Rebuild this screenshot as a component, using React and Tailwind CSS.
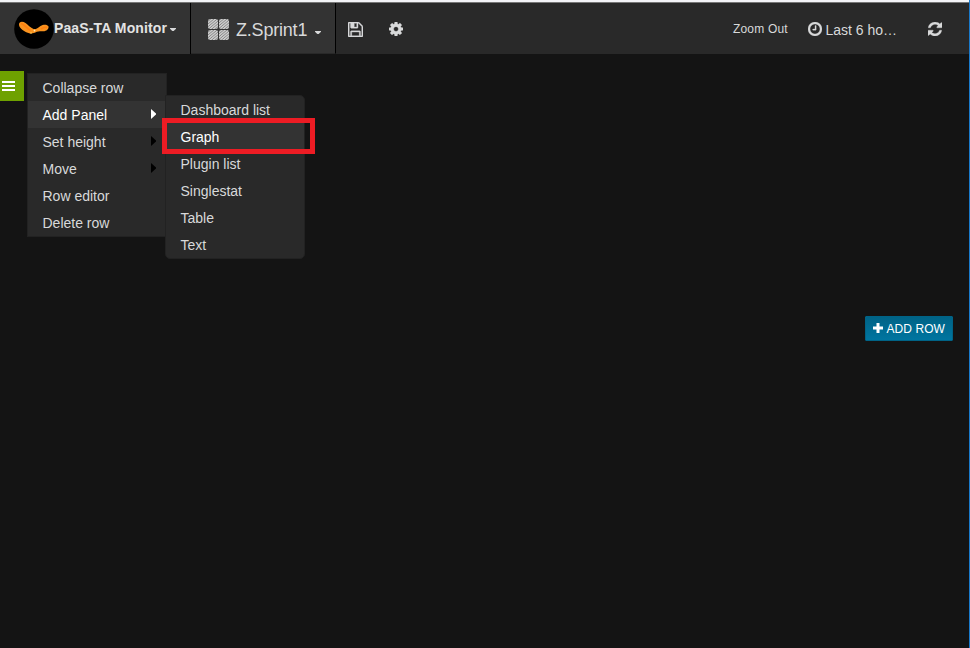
const ICONS = {
  save: 'M384 1536h768v-384h-768v384zm896 0h128v-896q0-14-10-38.5t-20-34.5l-281-281q-10-10-34-20t-39-10v416q0 40-28 68t-68 28h-576q-40 0-68-28t-28-68v-416h-128v1280h128v-416q0-40 28-68t68-28h832q40 0 68 28t28 68v416zm-384-928v-320q0-13-9.5-22.5t-22.5-9.5h-192q-13 0-22.5 9.5t-9.5 22.5v320q0 13 9.5 22.5t22.5 9.5h192q13 0 22.5-9.5t9.5-22.5zm640 32v928q0 40-28 68t-68 28h-1344q-40 0-68-28t-28-68v-1344q0-40 28-68t68-28h928q40 0 88 20t76 48l280 280q28 28 48 76t20 88z',
  cog: 'M1024 896q0-106-75-181t-181-75-181 75-75 181 75 181 181 75 181-75 75-181zm512-109v222q0 12-8 23t-20 13l-185 28q-19 54-39 91 35 50 107 138 10 12 10 25t-9 23q-27 37-99 108t-94 71q-12 0-26-9l-138-108q-44 23-91 38-16 136-29 186-7 28-36 28h-222q-14 0-24.5-8.5t-11.5-21.5l-28-184q-49-16-90-37l-141 107q-10 9-25 9-14 0-25-11-126-114-165-168-7-10-7-23 0-12 8-23 15-21 51-66.5t54-70.5q-27-50-41-99l-183-27q-13-2-21-12.5t-8-23.5v-222q0-12 8-23t19-13l186-28q14-46 39-92-40-57-107-138-10-12-10-24 0-10 9-23 26-36 98.5-107.5t94.5-71.5q13 0 26 10l138 107q44-23 91-38 16-136 29-186 7-28 36-28h222q14 0 24.5 8.5t11.5 21.5l28 184q49 16 90 37l142-107q9-9 24-9 13 0 25 10 129 119 165 170 7 8 7 22 0 12-8 23-15 21-51 66.5t-54 70.5q26 50 41 98l183 28q13 2 21 12.5t8 23.5z',
  clock: 'M896 544v448q0 14-9 23t-23 9h-320q-14 0-23-9t-9-23v-64q0-14 9-23t23-9h224v-352q0-14 9-23t23-9h64q14 0 23 9t9 23zm416 352q0-148-73-273t-198-198-273-73-273 73-198 198-73 273 73 273 198 198 273 73 273-73 198-198 73-273zm224 0q0 209-103 385.5t-279.5 279.5-385.5 103-385.5-103-279.5-279.5-103-385.5 103-385.5 279.5-279.5 385.5-103 385.5 103 279.5 279.5 103 385.5z',
  refresh: 'M1511 1056q0 5-1 7-64 268-268 434.5t-478 166.5q-146 0-282.5-55t-243.5-157l-129 129q-19 19-45 19t-45-19-19-45v-448q0-26 19-45t45-19h448q26 0 45 19t19 45-19 45l-137 137q71 66 161 102t187 36q134 0 250-65t186-179q11-17 53-117 8-23 30-23h192q13 0 22.5 9.5t9.5 22.5zm25-800v448q0 26-19 45t-45 19h-448q-26 0-45-19t-19-45 19-45l138-138q-148-137-349-137-134 0-250 65t-186 179q-11 17-53 117-8 23-30 23h-199q-13 0-22.5-9.5t-9.5-22.5v-7q65-268 270-434.5t480-166.5q146 0 284 55.5t245 156.5l130-129q19-19 45-19t45 19 19 45z',
};

function Icon({ name, className }) {
  return (
    <svg viewBox="0 128 1536 1536" className={className} fill="currentColor" stroke="currentColor" strokeWidth="35">
      <path d={ICONS[name]} />
    </svg>
  );
}

function Caret({ className }) {
  return (
    <svg viewBox="0 0 6 3" className={className} fill="currentColor">
      <path d="M0 0h6v.8L3.700 3H2.300L0 .8z" />
    </svg>
  );
}

function Logo() {
  return (
    <svg viewBox="0 0 40 40" className="size-10 shrink-0">
      <circle cx="20" cy="20" r="19.800" fill="#000" />
      <path
        d="M5 15.500c0-3 3.600-3.400 6.500-1.400 2.600 1.900 4.600 4.800 8.500 6.100 2.800 0 4-1.200 6.500-3.200 3-2 7-1.600 7.900.3.700 2-.9 4.300-3.900 4.900-2.900.4-4.900-.7-7.700.6-3 1.600-5.400 2.300-8.300 1.200C10.500 22.600 5 19.500 5 15.500z"
        fill="#f9931f"
      />
      <path d="M7 14.500c3.500.5 5.500 5 9.500 7M27 20c2-1.500 4-2 6-1.500" stroke="#ff7f10" strokeWidth="1.500" fill="none" />
      <circle cx="20.500" cy="21.500" r=".9" fill="#ffe9b0" />
      <circle cx="17" cy="24" r=".8" fill="#ffd75e" />
    </svg>
  );
}

function DashboardIcon() {
  const tiles = [[0, 0], [11, 0], [0, 11], [11, 11]];
  return (
    <svg viewBox="0 0 21 21" className="mt-[2px] size-[21px] shrink-0">
      <defs>
        <pattern id="hatch" width="2.100" height="2.100" patternUnits="userSpaceOnUse" patternTransform="rotate(50)">
          <rect width="2.100" height="2.100" fill="#858585" />
          <rect width="1.300" height="2.100" fill="#d0d0d0" />
        </pattern>
      </defs>
      {tiles.map(([x, y]) => (
        <rect key={`${x}-${y}`} x={x} y={y} width="10" height="10" rx="2" fill="url(#hatch)" />
      ))}
    </svg>
  );
}

function MenuItem({ label, active, arrow }) {
  return (
    <li
      className={`flex h-[27px] items-center justify-between pl-[14.5px] pr-[10px] ${
        active ? 'bg-[#333333] text-white' : 'text-[#d8d9da]'
      }`}
    >
      <span className="pt-px">{label}</span>
      {arrow && (
        <svg viewBox="0 0 5 10" className={`mb-[2px] h-[10px] w-[5px] ${active ? 'text-white' : 'text-black'}`} fill="currentColor">
          <path d="M0 0l5 4.500v1L0 10z" />
        </svg>
      )}
    </li>
  );
}

const ROW_MENU = [
  { label: 'Collapse row' },
  { label: 'Add Panel', active: true, arrow: true },
  { label: 'Set height', arrow: true },
  { label: 'Move', arrow: true },
  { label: 'Row editor' },
  { label: 'Delete row' },
];

const PANEL_MENU = [
  { label: 'Dashboard list' },
  { label: 'Graph', active: true },
  { label: 'Plugin list' },
  { label: 'Singlestat' },
  { label: 'Table' },
  { label: 'Text' },
];

export default function App() {
  return (
    <div className="relative flex h-[648px] w-[970px] flex-col overflow-hidden border-r border-[#1979ca] bg-[#141414] font-['Liberation_Sans',Arial,sans-serif] text-[14px] leading-5 text-[#d8d9da]">
      <div className="h-[3px] shrink-0 border-b border-[#777777] bg-[#f3f4f7]" />
      <header className="flex h-[51px] shrink-0 items-stretch bg-[#292929]">
        <div className="flex w-[191px] items-center border-r border-black bg-[#333333] pl-[14px]">
          <Logo />
          <span className="-mt-px whitespace-nowrap text-[14px] font-bold tracking-[0.120px] text-[#e3e3e3]">PaaS-TA Monitor</span>
          <Caret className="mt-[2px] ml-[3px] h-[3px] w-[6px]" />
        </div>
        <div className="flex w-[145px] items-center border-r border-b border-r-black border-b-[#292929] bg-[#333333] pl-[17px]">
          <DashboardIcon />
          <span className="ml-[7px] pt-[3px] text-[18px] tracking-[-0.200px]">Z.Sprint1</span>
          <Caret className="mt-[8px] ml-[8px] h-[3px] w-[6px]" />
        </div>
        <div className="flex items-center gap-[26px] pl-3">
          <Icon name="save" className="mt-[2px] size-[15px]" />
          <Icon name="cog" className="mt-px -ml-[0.5px] size-[14px]" />
        </div>
        <div className="ml-auto flex items-center pr-[27px]">
          <span className="pt-px text-[12px] tracking-[0.200px]">Zoom Out</span>
          <Icon name="clock" className="mt-px ml-5 size-[14px]" />
          <span className="ml-[3.5px] pt-[2px]">Last 6 ho…</span>
          <Icon name="refresh" className="mt-px ml-[31px] size-[14px]" />
        </div>
      </header>

      <main className="flex flex-1 flex-col">
        <div className="mt-[17px] flex h-[30px] w-6 items-center bg-[#6ea100] pl-[2px]">
          <div className="flex w-[13px] flex-col gap-[2px]">
            <i className="h-[2px] bg-white" />
            <i className="h-[2px] bg-white" />
            <i className="h-[2px] bg-white" />
          </div>
        </div>
        <div className="mt-[215px] mr-4 flex h-[25px] w-[88px] items-center self-end rounded-[1px] border border-[#006386] bg-linear-to-b from-[#006386] to-[#0075a0] pl-[7px] text-[12px] text-white">
          <svg viewBox="0 0 10 10" className="mb-px size-[10px]" fill="currentColor">
            <path d="M3.500 0h3v3.500h3.500v3h-3.500v3.500h-3v-3.500H0v-3h3.500z" />
          </svg>
          <span className="ml-[3.5px] whitespace-nowrap tracking-[0.060px]">ADD ROW</span>
        </div>
      </main>

      <ul className="absolute top-[73px] left-[27px] h-[164px] w-[140px] border border-[#222222] bg-[#292929]">
        {ROW_MENU.map((item) => (
          <MenuItem key={item.label} {...item} />
        ))}
      </ul>
      <ul className="absolute top-[95px] left-[165px] h-[164px] w-[140px] rounded-[5px] rounded-tl-none border border-[#222222] bg-[#292929]">
        {PANEL_MENU.map((item) => (
          <MenuItem key={item.label} {...item} />
        ))}
      </ul>
      <div className="absolute top-[118px] left-[162px] h-[36px] w-[153px] border-5 border-[#ed1c24]" />
    </div>
  );
}
